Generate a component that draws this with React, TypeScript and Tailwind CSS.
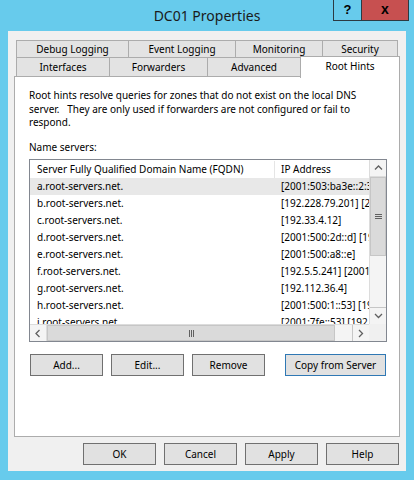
import React from 'react'

type Server = {
  name: string
  ip: string
}

const servers: Server[] = [
  { name: 'a.root-servers.net.', ip: '[2001:503:ba3e::2:30] [198.41.0.4]' },
  { name: 'b.root-servers.net.', ip: '[192.228.79.201] [2001:500:84::b]' },
  { name: 'c.root-servers.net.', ip: '[192.33.4.12]' },
  { name: 'd.root-servers.net.', ip: '[2001:500:2d::d] [199.7.91.13]' },
  { name: 'e.root-servers.net.', ip: '[2001:500:a8::e]' },
  { name: 'f.root-servers.net.', ip: '[192.5.5.241] [2001:500:2f::f]' },
  { name: 'g.root-servers.net.', ip: '[192.112.36.4]' },
  { name: 'h.root-servers.net.', ip: '[2001:500:1::53] [198.97.190.53]' },
  { name: 'i.root-servers.net.', ip: '[2001:7fe::53] [192.36.148.17]' },
]

// small chevron used on the scroll bar buttons
function Chevron({ dir }: { dir: 'up' | 'down' | 'left' | 'right' }) {
  const pts = {
    up: '1,5.5 4.5,2 8,5.5',
    down: '1,2 4.5,5.5 8,2',
    left: '5.5,1 2,4.5 5.5,8',
    right: '2,1 5.5,4.5 2,8',
  }[dir]
  const vertical = dir === 'up' || dir === 'down'
  return (
    <svg width={vertical ? 9 : 8} height={vertical ? 8 : 9} viewBox={vertical ? '0 0 9 8' : '0 0 8 9'}>
      <polyline points={pts} fill="none" stroke="#606060" strokeWidth="1.3" />
    </svg>
  )
}

function Tab({ label, w, first }: { label: string; w: string; first?: boolean }) {
  return (
    <div
      className={`${w} ${first ? '' : '-ml-px'} h-full border-t border-x border-[#acacac] bg-[#e3e3e3] flex items-center justify-center`}
    >
      {label}
    </div>
  )
}

function Button({ label, w = 'w-[73px]', def }: { label: string; w?: string; def?: boolean }) {
  return (
    <div
      className={`${w} h-[22px] border ${def ? 'border-[#2f78b4]' : 'border-[#707070]'} bg-[#e1e1e1] flex items-center justify-center`}
    >
      {label}
    </div>
  )
}

export default function App() {
  return (
    <div className="w-[414px] h-[480px] bg-[#67cbec] flex flex-col font-['Noto_Sans','Open_Sans',sans-serif] text-[10px] text-black">
      {/* title bar */}
      <div className="h-[31px] grid grid-cols-[81px_1fr_81px]">
        <div />
        <div className="text-center text-[14px] leading-[31px] text-[#1a1a1a]">DC01 Properties</div>
        <div className="flex justify-end items-start pr-[5px]">
          <div className="w-[28px] h-[21px] border-l border-b border-[#2c3a42] flex items-center justify-center font-['Liberation_Sans',sans-serif] font-bold text-[13px]">
            ?
          </div>
          <div className="w-[48px] h-[21px] border-x border-b border-[#2c3a42] bg-[#c75050] flex items-center justify-center font-['Liberation_Sans',sans-serif] font-bold text-[14px] leading-none pb-[2px]">
            x
          </div>
        </div>
      </div>

      {/* client area */}
      <div className="mx-[8px] h-[440px] bg-[#f0f0f0] flex flex-col pt-[9px] px-[6px] pb-[6px]">
        {/* tabs */}
        <div className="ml-[2px] flex flex-col">
          <div className="h-[17px] flex">
            <Tab label="Debug Logging" w="w-[113px]" first />
            <Tab label="Event Logging" w="w-[108px]" />
            <Tab label="Monitoring" w="w-[88px]" />
            <Tab label="Security" w="w-[76px]" />
          </div>
          <div className="h-[19px] flex items-start">
            <Tab label="Interfaces" w="w-[94px]" first />
            <Tab label="Forwarders" w="w-[99px]" />
            <Tab label="Advanced" w="w-[94px]" />
            <div className="w-[100px] h-[22px] -ml-px -mt-px relative z-10 border-t border-x border-[#acacac] bg-white flex items-center justify-center pb-[3px]">
              Root Hints
            </div>
          </div>
        </div>

        {/* tab panel */}
        <div className="h-[361px] bg-white border border-[#acacac] pt-[12px] pl-[14px] flex flex-col">
          <p className="leading-[13.5px] whitespace-pre">
            {'Root hints resolve queries for zones that do not exist on the local DNS\nserver.   They are only used if forwarders are not configured or fail to\nrespond.'}
          </p>
          <p className="mt-[11px] leading-[13.5px]">Name servers:</p>

          {/* list view */}
          <div className="mt-[5px] w-[358px] h-[183px] border border-[#828790] grid grid-cols-[1fr_17px] grid-rows-[1fr_17px]">
            <div className="overflow-hidden">
              <div className="h-[18px] flex items-center pt-px">
                <div className="w-[245px] h-full border-r border-[#e5e5e5] pl-[7px] flex items-center">
                  Server Fully Qualified Domain Name (FQDN)
                </div>
                <div className="pl-[6px] whitespace-nowrap">IP Address</div>
              </div>
              {servers.map((s, i) => (
                <div
                  key={s.name}
                  className={`h-[17px] flex items-center whitespace-nowrap ${i === 0 ? 'bg-[#e8e8e8]' : ''}`}
                >
                  <div className="w-[245px] shrink-0 pl-[7px]">{s.name}</div>
                  <div className="pl-[6px]">{s.ip}</div>
                </div>
              ))}
            </div>

            {/* vertical scroll bar */}
            <div className="flex flex-col bg-[#f4f4f4] border-l border-[#dcdcdc]">
              <div className="h-[17px] border-b border-[#dcdcdc] flex items-center justify-center">
                <Chevron dir="up" />
              </div>
              <div className="h-[79px] bg-[#dadada] border border-[#c6c6c6] flex flex-col items-center justify-center gap-[1px]">
                <div className="w-[7px] h-px bg-[#606060]" />
                <div className="w-[7px] h-px bg-[#606060]" />
                <div className="w-[7px] h-px bg-[#606060]" />
              </div>
              <div className="flex-1" />
              <div className="h-[17px] border-t border-[#c6c6c6] flex items-center justify-center">
                <Chevron dir="down" />
              </div>
            </div>

            {/* horizontal scroll bar */}
            <div className="flex bg-[#f4f4f4] border-t border-[#dcdcdc]">
              <div className="w-[17px] border-r border-[#dcdcdc] flex items-center justify-center">
                <Chevron dir="left" />
              </div>
              <div className="w-[288px] bg-[#dadada] border border-[#c6c6c6] flex items-center justify-center gap-[1px]">
                <div className="w-px h-[7px] bg-[#606060]" />
                <div className="w-px h-[7px] bg-[#606060]" />
                <div className="w-px h-[7px] bg-[#606060]" />
              </div>
              <div className="flex-1" />
              <div className="w-[17px] border-l border-[#c6c6c6] flex items-center justify-center">
                <Chevron dir="right" />
              </div>
            </div>
            <div className="bg-[#f0f0f0]" />
          </div>

          <div className="mt-[12px] ml-px flex">
            <Button label="Add..." />
            <div className="ml-[8px]">
              <Button label="Edit..." />
            </div>
            <div className="ml-[8px]">
              <Button label="Remove" />
            </div>
            <div className="ml-[20px]">
              <Button label="Copy from Server" w="w-[101px]" def />
            </div>
          </div>
        </div>

        {/* dialog buttons */}
        <div className="mt-[6px] mr-px flex justify-end gap-[8px]">
          <Button label="OK" />
          <Button label="Cancel" />
          <Button label="Apply" />
          <Button label="Help" />
        </div>
      </div>
    </div>
  )
}
